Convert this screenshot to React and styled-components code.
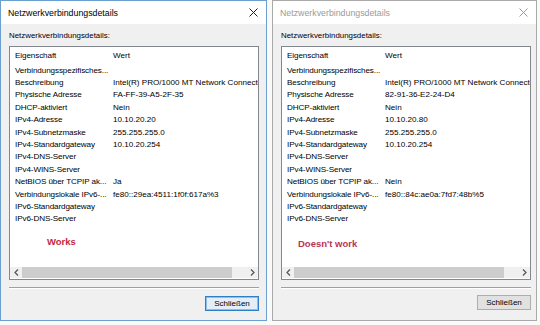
import React from 'react';
import styled, { createGlobalStyle } from 'styled-components';

const Global = createGlobalStyle`
  body {
    margin: 0;
    background: #fafafa;
    font-family: "Liberation Sans", Arial, sans-serif;
  }
`;

const Screen = styled.div`
  display: flex;
  gap: 5px;
  width: 540px;
  height: 325px;
  overflow: hidden;
`;

const Window = styled.div`
  box-sizing: border-box;
  width: ${(p) => p.$width}px;
  height: 321px;
  flex: none;
  border: 1px solid ${(p) => (p.$active ? '#6a9fcf' : '#a9a9a9')};
  background: #f0f0f0;
  display: flex;
  flex-direction: column;
`;

const TitleBar = styled.div`
  height: 23px;
  background: #fff;
  display: flex;
  align-items: center;
  justify-content: space-between;
  padding: 0 8px 0 7px;
  font-size: 8.8px;
  color: ${(p) => (p.$active ? '#000' : '#9a9a9a')};
`;

const Body = styled.div`
  padding: 7px 7px 0 8px;
  display: flex;
  flex-direction: column;
`;

const Label = styled.div`
  font-size: 7.9px;
  line-height: 10px;
  height: 10px;
  margin-bottom: 5px;
  color: #000;
`;

const ListBox = styled.div`
  box-sizing: border-box;
  width: 250px;
  height: 234px;
  border: 1px solid #828790;
  background: #fff;
  display: flex;
  flex-direction: column;
  overflow: hidden;
  padding-bottom: 1px;
  font-size: 8.1px;
  color: #000;
`;

const Header = styled.div`
  height: 17px;
  display: flex;
  align-items: center;
  flex: none;
`;

const Row = styled.div`
  height: 12.4px;
  display: flex;
  align-items: center;
  flex: none;
`;

const Prop = styled.span`
  box-sizing: border-box;
  width: 98px;
  flex: none;
  padding-left: 5px;
  white-space: nowrap;
  letter-spacing: -0.1px;
`;

const Val = styled.span`
  padding-left: 5px;
  white-space: nowrap;
`;

const Note = styled.div`
  margin-top: ${(p) => p.$top}px;
  padding-left: ${(p) => p.$left}px;
  font-size: 9.5px;
  font-weight: bold;
  line-height: 12px;
  color: ${(p) => p.$color};
`;

const ScrollBar = styled.div`
  margin-top: auto;
  height: 11px;
  display: flex;
  background: #f0f0f0;
  flex: none;
`;

const Arrow = styled.div`
  width: 12px;
  flex: none;
  display: flex;
  align-items: center;
  justify-content: center;
`;

const Track = styled.div`
  flex: 1;
  display: flex;
  align-items: stretch;
`;

const Thumb = styled.div`
  width: 210px;
  background: #cdcdcd;
`;

const Separator = styled.div`
  width: 250px;
  margin-top: 7px;
  border-top: 1px solid #a0a0a0;
  border-bottom: 1px solid #fff;
`;

const Footer = styled.div`
  width: 250px;
  display: flex;
  justify-content: flex-end;
  margin-top: ${(p) => p.$top}px;
`;

const Button = styled.button`
  box-sizing: border-box;
  width: 54px;
  height: 15px;
  padding: 0;
  font-family: inherit;
  font-size: 8px;
  color: #000;
  border: 1px solid ${(p) => (p.$default ? '#2f7fc4' : '#adadad')};
  background: ${(p) => (p.$default ? '#e3eef8' : '#e1e1e1')};
  box-shadow: ${(p) => (p.$default ? 'inset 0 0 0 1px #8fbde3' : 'none')};
`;

const Close = ({ color }) => (
  <svg width="9" height="9" viewBox="0 0 9 9">
    <path d="M0.5 0.5 L8.5 8.5 M8.5 0.5 L0.5 8.5" stroke={color} strokeWidth="1" fill="none" />
  </svg>
);

const Chevron = ({ dir }) => (
  <svg width="5" height="7" viewBox="0 0 5 7">
    <path
      d={dir === 'left' ? 'M4 0.5 L1 3.5 L4 6.5' : 'M1 0.5 L4 3.5 L1 6.5'}
      stroke="#555"
      strokeWidth="1.2"
      fill="none"
    />
  </svg>
);

const makeRows = (d) => [
  ['Verbindungsspezifisches...', ''],
  ['Beschreibung', 'Intel(R) PRO/1000 MT Network Connection'],
  ['Physische Adresse', d.mac],
  ['DHCP-aktiviert', 'Nein'],
  ['IPv4-Adresse', d.ip],
  ['IPv4-Subnetzmaske', '255.255.255.0'],
  ['IPv4-Standardgateway', '10.10.20.254'],
  ['IPv4-DNS-Server', ''],
  ['IPv4-WINS-Server', ''],
  ['NetBIOS über TCPIP ak...', d.netbios],
  ['Verbindungslokale IPv6-...', d.ipv6],
  ['IPv6-Standardgateway', ''],
  ['IPv6-DNS-Server', ''],
];

const windows = [
  {
    width: 267,
    active: true,
    mac: 'FA-FF-39-A5-2F-35',
    ip: '10.10.20.20',
    netbios: 'Ja',
    ipv6: 'fe80::29ea:4511:1f0f:617a%3',
    note: 'Works',
    noteColor: '#c3283d',
    noteLeft: 37,
    noteTop: 11,
    footerTop: 7,
  },
  {
    width: 265,
    active: false,
    mac: '82-91-36-E2-24-D4',
    ip: '10.10.20.80',
    netbios: 'Nein',
    ipv6: 'fe80::84c:ae0a:7fd7:48b%5',
    note: "Doesn't work",
    noteColor: '#bd3352',
    noteLeft: 16,
    noteTop: 13,
    footerTop: 6,
  },
];

const DetailsWindow = ({ d }) => (
  <Window $width={d.width} $active={d.active}>
    <TitleBar $active={d.active}>
      <span>Netzwerkverbindungsdetails</span>
      <Close color={d.active ? '#222' : '#9a9a9a'} />
    </TitleBar>
    <Body>
      <Label>Netzwerkverbindungsdetails:</Label>
      <ListBox>
        <Header>
          <Prop>Eigenschaft</Prop>
          <Val>Wert</Val>
        </Header>
        {makeRows(d).map(([p, v]) => (
          <Row key={p}>
            <Prop>{p}</Prop>
            <Val>{v}</Val>
          </Row>
        ))}
        <Note $top={d.noteTop} $left={d.noteLeft} $color={d.noteColor}>
          {d.note}
        </Note>
        <ScrollBar>
          <Arrow>
            <Chevron dir="left" />
          </Arrow>
          <Track>
            <Thumb />
          </Track>
          <Arrow>
            <Chevron dir="right" />
          </Arrow>
        </ScrollBar>
      </ListBox>
      <Separator />
      <Footer $top={d.footerTop}>
        <Button $default={d.active}>Schließen</Button>
      </Footer>
    </Body>
  </Window>
);

export default function App() {
  return (
    <>
      <Global />
      <Screen>
        {windows.map((d) => (
          <DetailsWindow key={d.note} d={d} />
        ))}
      </Screen>
    </>
  );
}
